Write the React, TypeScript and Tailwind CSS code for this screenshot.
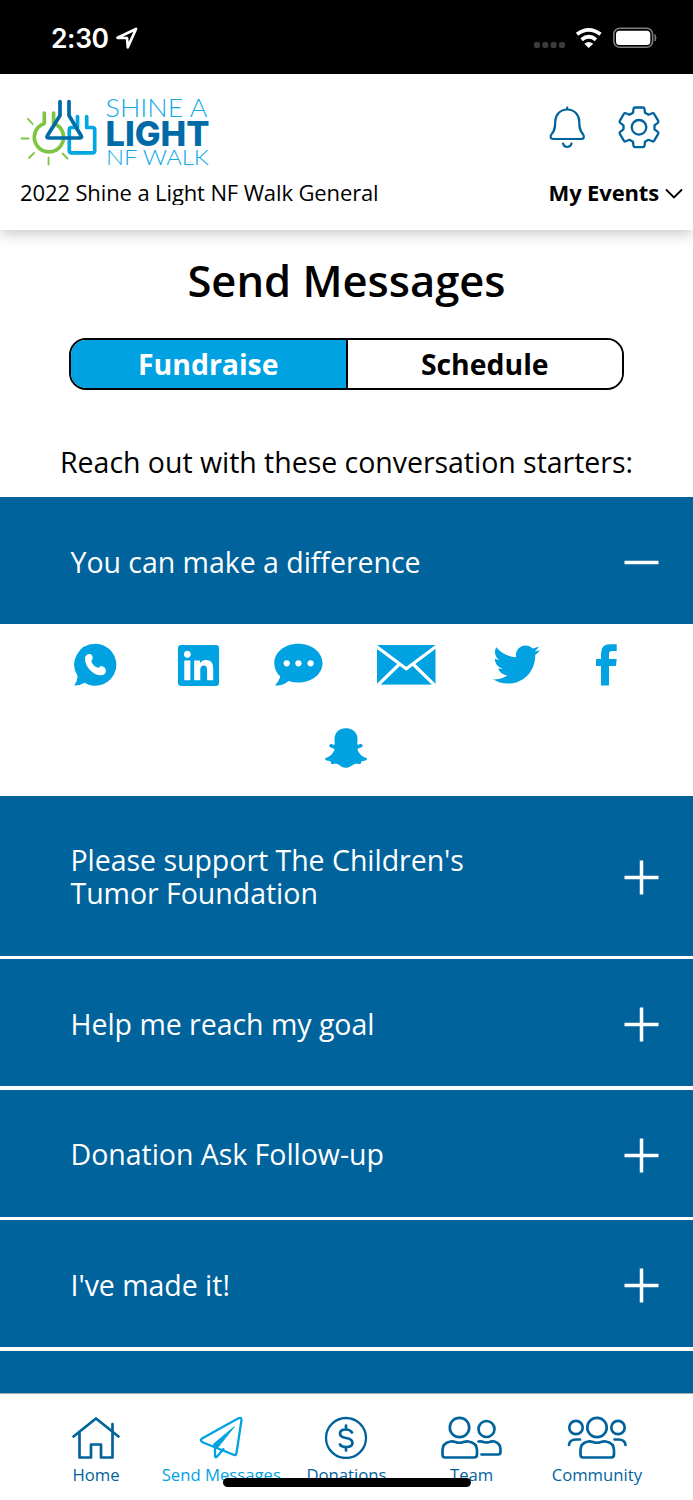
import { useState } from "react";
import type { ReactNode } from "react";
import { FaLinkedin, FaSnapchatGhost, FaTwitter } from "react-icons/fa";

const messages = [
  "You can make a difference",
  "Please support The Children's Tumor Foundation",
  "Help me reach my goal",
  "Donation Ask Follow-up",
  "I've made it!",
];

const StatusBar = () => (
  <div className="flex h-[74px] shrink-0 items-start justify-between bg-black pl-[51px] pr-[35px] pt-[22px] text-white">
    <div className="flex items-center gap-[7px]">
      <span className="font-[Inter,sans-serif] text-[26.5px] font-semibold leading-8 tracking-[-0.4px]">
        2:30
      </span>
      <svg width="22" height="22" viewBox="0 0 22 22" fill="none" stroke="currentColor" strokeWidth="2.7" strokeLinejoin="round">
        <path d="M1.500 10.800 20 2 11.800 20.300 11 11Z" />
      </svg>
    </div>
    <svg className="mt-1" width="125" height="24" viewBox="533 26 125 24" fill="none">
      <g fill="#3b3b3b">
        <rect x="534" y="42" width="6" height="6" rx="2" />
        <rect x="542.3" y="42" width="6" height="6" rx="2" />
        <rect x="550.6" y="42" width="6" height="6" rx="2" />
        <rect x="559" y="42" width="6" height="6" rx="2" />
      </g>
      <path d="M577 34.200Q588.700 25.500 600.500 34.200M581.600 39.700Q588.700 33.800 596 39.700" stroke="white" strokeWidth="3.8" />
      <path d="M584.300 43.700Q588.700 40.200 593.200 43.700L588.700 48Z" fill="white" />
      <rect x="613.8" y="28.300" width="38.800" height="19" rx="6" stroke="#7d7d7d" strokeWidth="1.6" />
      <rect x="616" y="30.800" width="34.300" height="14.300" rx="3.500" fill="white" />
      <path d="M655 34.500Q657 38 655 41Z" fill="#7d7d7d" stroke="#7d7d7d" />
    </svg>
  </div>
);

const Logo = () => (
  <svg className="overflow-visible" width="195" height="74" viewBox="18 95 195 74" fill="none" strokeLinecap="round" strokeLinejoin="round">
    <g stroke="#7fc443" strokeWidth="3.700">
      <path d="M44.300 113V123.500A14.600 14.600 0 1 0 53.600 123.500V113" />
      <path d="M21.500 138.500H28.500M28 118.800L32.700 124M29 158L34 153M48.500 157.500V164.500M62.500 153.500L67.500 158.500" strokeWidth="1.800" />
    </g>
    <path d="M77.500 116.500V127.500H71.500Q69.300 127.500 69.300 129.500V150.500Q69.300 152.800 71.500 152.800H92.500Q94.700 152.800 94.700 150.500V129.500Q94.700 127.500 92.500 127.500H86.700V116.500" stroke="#00a7e5" strokeWidth="3.700" />
    <path d="M60 101.500V115.500L47.500 135.500Q46 138 49 138H79.500Q82.500 138 81 135.500L69 115.500V101.500" stroke="#006ba6" strokeWidth="3.700" />
    <g fontFamily="Lato, sans-serif" fill="#12a9e6">
      <text x="105.500" y="117.300" fontSize="26" fontWeight="300" textLength="102" lengthAdjust="spacingAndGlyphs">SHINE A</text>
      <text x="106" y="165.400" fontSize="22" fontWeight="300" textLength="103" lengthAdjust="spacingAndGlyphs">NF WALK</text>
    </g>
    <text x="105.500" y="145.500" fontFamily="Inter, sans-serif" fontSize="33.500" fontWeight="800" textLength="104" lengthAdjust="spacingAndGlyphs" fill="#006ba6">LIGHT</text>
  </svg>
);

const Bell = () => (
  <svg width="38" height="44" viewBox="548 105 38 44" fill="none" stroke="#00639c" strokeWidth="2.200" strokeLinecap="round" strokeLinejoin="round">
    <path d="M567.200 107.500V109.500M567.200 109.500C560 109.500 555.500 115 555.300 121C555.200 127 555 130 552 133.500C549.500 136.500 550.500 139 553 139H581.500C584 139 585 136.500 582.500 133.500C579.500 130 579.300 127 579.200 121C579 115 574.500 109.500 567.200 109.500Z" />
    <path d="M563 143.500Q564 147 567.200 147Q570.500 147 571.500 143.500" />
  </svg>
);

const Gear = () => (
  <svg width="44" height="44" viewBox="-22 -22.300 44 44" fill="none" stroke="#00639c" strokeWidth="2.300" strokeLinejoin="round">
    <path d="M-5.500-18.500Q-5.300-19.800-4-19.800H4Q5.300-19.800 5.500-18.500L6-14.500 9.500-12.500 13.300-14Q14.500-14.500 15.200-13.300L19.200-6.500Q19.800-5.300 18.800-4.500L15.500-2V2L18.800 4.500Q19.800 5.300 19.200 6.500L15.200 13.300Q14.500 14.500 13.300 14L9.500 12.500 6 14.500 5.500 18.500Q5.300 19.800 4 19.800H-4Q-5.300 19.800-5.500 18.500L-6 14.500-9.500 12.500-13.300 14Q-14.500 14.500-15.200 13.300L-19.200 6.500Q-19.800 5.300-18.800 4.500L-15.500 2V-2L-18.800-4.500Q-19.800-5.300-19.200-6.500L-15.200-13.300Q-14.500-14.500-13.300-14L-9.500-12.500-6-14.500Z" />
    <circle r="7.300" />
  </svg>
);

const Header = () => (
  <header className="relative flex h-[156px] shrink-0 flex-col pl-[18px] pr-[10px] pt-[21px] shadow-[0_3px_14px_rgba(0,0,0,0.24)]">
    <div className="flex h-[74px] items-start justify-between">
      <Logo />
      <div className="flex items-center gap-[31px] pr-[22px] pt-[10px]">
        <button>
          <Bell />
        </button>
        <button>
          <Gear />
        </button>
      </div>
    </div>
    <div className="mt-[8px] flex items-start justify-between text-[22px] leading-[30px]">
      <p className="ml-[2px] h-[28px] overflow-hidden whitespace-nowrap tracking-[-0.12px]">
        2022 Shine a Light NF Walk General
      </p>
      <button className="flex items-center gap-[6px] font-bold tracking-[-0.15px]">
        My Events
        <svg className="mt-[3px]" width="18" height="12" viewBox="0 0 18 12" fill="none" stroke="black" strokeWidth="1.800" strokeLinecap="round">
          <path d="M1.500 2 9 9.500 16.500 2" />
        </svg>
      </button>
    </div>
  </header>
);

const ShareIcons = () => (
  <div className="h-[171.300px] text-[#00a2e1]">
    <div className="flex h-[81px] items-center pl-[73px]">
      <svg width="44" height="44" viewBox="73 643 44 44" fill="currentColor">
        <path d="M95.300 643.700A21 21 0 1 1 84.500 682.700Q80 685.700 74.300 685.500Q77 682 77.700 676.200A21 21 0 0 1 95.300 643.700Z" />
        <path fill="white" d="M85 658C85.300 655.500 87.500 654 89.300 654C91.500 654 92.500 655.500 92.700 657.500C93 659.500 91.200 660 91.500 661.700C92.500 664.500 95.500 667.500 98.300 667.700C99.800 667.500 100 665.700 101.700 666C104 666.700 105.700 668 105.900 670.200C106 674 103.500 675.300 100 675.300C92 674.500 84.500 666 85 658Z" />
      </svg>
      <FaLinkedin className="ml-[58px] mt-px h-[47px] w-[47px]" />
      <svg className="ml-[51px]" width="50" height="44" viewBox="273 643 50 44" fill="currentColor">
        <path d="M298.300 643.700C311.500 643.700 322.500 652 322.500 663C322.500 674.500 311.500 682.500 298.300 682.500Q293 682.500 288.500 681Q283 686 275 685.500Q279 681.500 280.300 676.500C276.500 673 274.300 668.500 274.300 663C274.300 652 285 643.700 298.300 643.700Z" />
        <g fill="white">
          <circle cx="286.700" cy="663.300" r="3.100" />
          <circle cx="298.400" cy="663.300" r="3.100" />
          <circle cx="310.600" cy="663.300" r="3.100" />
        </g>
      </svg>
      <svg className="ml-[54px]" width="59" height="40" viewBox="377 645 59 40" fill="none">
        <rect x="377" y="645" width="58.500" height="39.600" fill="#00a2e1" />
        <path d="M375 645.500 406.300 668.700 437.500 645.500M376.500 686.500 399 664.500M436 686.500 413.500 664.500" stroke="white" strokeWidth="3.200" />
      </svg>
      <FaTwitter className="ml-[57px] h-[47px] w-[47px]" />
      <svg className="ml-[55px]" width="23" height="43" viewBox="595 643 23 43" fill="currentColor">
        <path d="M601 685.500V666H596V659H601V653.500Q601 644.200 610 644.200H616.700V651H612Q609 651 609 654V659H616.700L616 666H609V685.500Z" />
      </svg>
    </div>
    <div className="flex h-[86px] items-center justify-center pr-px">
      <FaSnapchatGhost className="h-[42px] w-[42px]" />
    </div>
  </div>
);

const MessageRow = ({
  title,
  open,
  onClick,
}: {
  title: string;
  open: boolean;
  onClick: () => void;
}) => (
  <button
    className="flex w-full items-center justify-between bg-[#00639c] pb-[45px] pl-[70.500px] pr-[34px] pt-[48.400px] text-left text-[28.500px] leading-[33.500px] tracking-[-0.03px] text-white"
    onClick={onClick}
  >
    <span className="w-[420px]">{title}</span>
    <svg className="-my-px" width="35" height="35" viewBox="0 0 35 35" stroke="white" strokeWidth="3.500">
      <path d={open ? "M.5 17.500H34.500" : "M.5 17.500H34.500M17.500 .5V34.500"} />
    </svg>
  </button>
);

const NavItem = ({
  label,
  active,
  children,
}: {
  label: string;
  active?: boolean;
  children: ReactNode;
}) => (
  <button
    className={`flex w-[125.200px] flex-col items-center ${
      active ? "text-[#00a2e1]" : "text-[#00639c]"
    }`}
  >
    <svg width="64" height="44" viewBox="-32 0 64 44" fill="none" stroke="currentColor" strokeWidth="2.700" strokeLinecap="round" strokeLinejoin="round">
      {children}
    </svg>
    <span className="mt-[5px] whitespace-nowrap text-[16.700px] leading-[22px]">
      {label}
    </span>
  </button>
);

const NavBar = () => (
  <nav className="relative flex h-[107px] shrink-0 items-start border-t border-[#aaa] bg-white pl-[33.500px] pt-[21px]">
    <NavItem label="Home">
      <path d="M-22.500 21.500 0 3.500 22.500 21.500M-16.500 17.500V42.500H-5V29.500H5V42.500H16.500V9" />
    </NavItem>
    <NavItem label="Send Messages" active>
      <path d="M-19 23.500 17 3.500Q20.500 1.500 20.500 5L15.500 38Q15 41 12 39.500L-18 27.500Q-21.500 25.500-19 23.500Z" strokeWidth="2.300" />
      <path d="M-6 32V41Q-5.500 43.500-3.500 41L2.500 34" strokeWidth="2.300" />
      <path d="M13 12-8 29.500-4 33Z" fill="currentColor" strokeWidth="1" />
    </NavItem>
    <NavItem label="Donations">
      <circle cx="0" cy="23" r="20" strokeWidth="2.300" />
      <path d="M0 10.500V14M0 32V35.500M6 17.500Q4 14.500 0 14.500Q-6 14.500-6 18.500Q-6 22 0 23Q6.500 24 6.500 28Q6.500 32 0 32Q-4.500 32-6 29.500" />
    </NavItem>
    <NavItem label="Team">
      <circle cx="-12.500" cy="12.500" r="9.700" />
      <path d="M-21.500 26.500Q-19.500 26-16.500 27Q-12.500 28.500-8.500 27Q-5.500 26-3.500 26.500Q5 28 5 35V39.500Q5 42.500 2 42.500H-27Q-29.500 42.500-29.500 39.500V35Q-29.500 28-21.500 26.500Z" />
      <circle cx="14.500" cy="14" r="8" />
      <path d="M6.500 26.500Q9.500 26 11.500 27Q14.500 28 17.500 27Q19.500 26 22.500 26.500Q28.500 28.500 28.500 34.500V37Q28.500 39.500 26 39.500H9.500" />
    </NavItem>
    <NavItem label="Community">
      <circle cx="0" cy="12.500" r="9.700" />
      <path d="M-9 26.500Q-7 26-4 27Q0 28.500 4 27Q7 26 9 26.500Q17 28 17 35V39.500Q17 42.500 14 42.500H-14Q-16.500 42.500-16.500 39.500V35Q-16.500 28-9 26.500Z" />
      <circle cx="-21" cy="12.500" r="6.700" />
      <circle cx="21" cy="12.500" r="6.700" />
      <path d="M-28 30Q-27.500 24.500-21 24.500H-17M28.500 30Q28 24.500 21.500 24.500H17.500" />
    </NavItem>
    {/* Home indicator */}
    <div className="absolute bottom-[13.500px] left-[222.500px] h-[8.500px] w-[248px] rounded-full bg-black" />
  </nav>
);

const App = () => {
  const [tab, setTab] = useState("Fundraise");
  const [openIndex, setOpenIndex] = useState(0);
  return (
    <div className="flex h-[1500px] w-[693px] flex-col overflow-hidden bg-white font-['Open_Sans',sans-serif] text-black">
      <StatusBar />
      <Header />
      <main className="flex min-h-0 flex-1 flex-col overflow-hidden">
        <h1 className="mt-[21px] text-center text-[43.500px] font-semibold leading-[60px]">
          Send Messages
        </h1>
        {/* Tabs */}
        <div className="mx-auto mt-[27px] flex h-[52px] w-[555px] shrink-0 overflow-hidden rounded-[17px] border-2 border-black text-[28.400px] font-bold">
          {["Fundraise", "Schedule"].map((name, index) => (
            <button
              key={name}
              className={`flex-1 ${index > 0 ? "border-l-2 border-black" : ""} ${
                tab === name ? "bg-[#00a2e1] text-white" : "bg-white"
              }`}
              onClick={() => setTab(name)}
            >
              {name}
            </button>
          ))}
        </div>
        <p className="mt-[52px] whitespace-nowrap text-center text-[28.500px] leading-[40px] tracking-[-0.03px]">
          Reach out with these conversation starters:
        </p>
        <div className="mt-[15.400px] shrink-0">
          {messages.map((title, index) => (
            <div key={title} className={openIndex === index ? "" : "mb-[3.500px]"}>
              <MessageRow
                title={title}
                open={openIndex === index}
                onClick={() => setOpenIndex(openIndex === index ? -1 : index)}
              />
              {openIndex === index && <ShareIcons />}
            </div>
          ))}
        </div>
        {/* Rest of the list, below the fold */}
        <div className="flex-1 bg-[#00639c]" />
      </main>
      <NavBar />
    </div>
  );
};

export default App;
